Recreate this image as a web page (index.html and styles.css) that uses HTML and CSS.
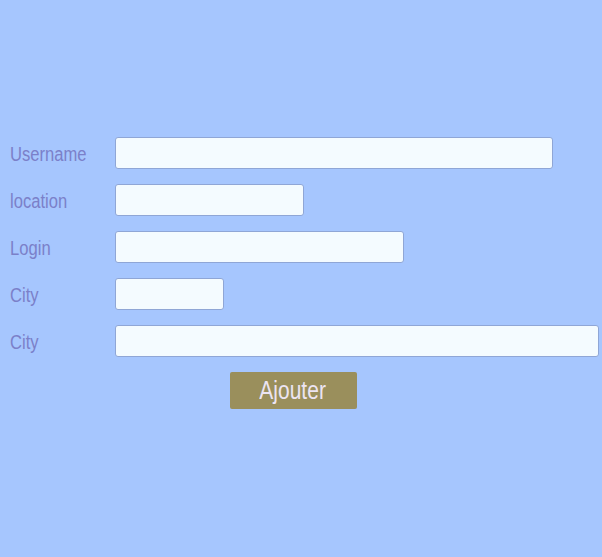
FILE: index.html
```html
<!DOCTYPE html>
<html>
<head>
<meta charset="utf-8">
<link rel="stylesheet" href="styles.css">
</head>
<body>
<form class="form">
  <div class="row"><label class="label"><span>Username</span></label><input class="field w-user" type="text"></div>
  <div class="row"><label class="label"><span>location</span></label><input class="field w-loc" type="text"></div>
  <div class="row"><label class="label"><span>Login</span></label><input class="field w-login" type="text"></div>
  <div class="row"><label class="label"><span>City</span></label><input class="field w-city" type="text"></div>
  <div class="row"><label class="label"><span>City</span></label><input class="field w-city2" type="text"></div>
  <div class="actions"><button class="btn" type="button"><span>Ajouter</span></button></div>
</form>
</body>
</html>
```
FILE: styles.css
```css
html, body {
  margin: 0;
  padding: 0;
  background: #a6c6fe;
  height: 100%;
}
.form {
  padding-top: 137px;
  display: flex;
  flex-direction: column;
  gap: 15px;
  font-family: "Liberation Sans", Arial, sans-serif;
}
.row {
  display: flex;
  align-items: center;
  height: 32px;
}
.label {
  box-sizing: border-box;
  width: 115px;
  padding-left: 10px;
  padding-top: 1px;
  color: #7b80c9;
  font-size: 20px;
  line-height: 32px;
}
.label span {
  display: inline-block;
  transform: scaleX(0.83);
  transform-origin: left center;
}
.field {
  box-sizing: border-box;
  height: 32px;
  margin: 0;
  border: 1px solid #8fa6d6;
  border-radius: 3px;
  background: #f4fbff;
  padding: 0 6px;
}
.w-user { width: 438px; }
.w-loc { width: 189px; }
.w-login { width: 289px; }
.w-city { width: 109px; }
.w-city2 { width: 484px; }
.actions {
  padding-left: 230px;
}
.btn {
  width: 127px;
  height: 37px;
  margin: 0;
  padding: 0;
  border: none;
  border-radius: 2px;
  background: #9a8f5c;
  color: #ece4f2;
  font-family: "Liberation Sans", Arial, sans-serif;
  font-size: 25px;
}
.btn span {
  display: inline-block;
  transform: scaleX(0.84);
  margin-left: -2px;
}
```
